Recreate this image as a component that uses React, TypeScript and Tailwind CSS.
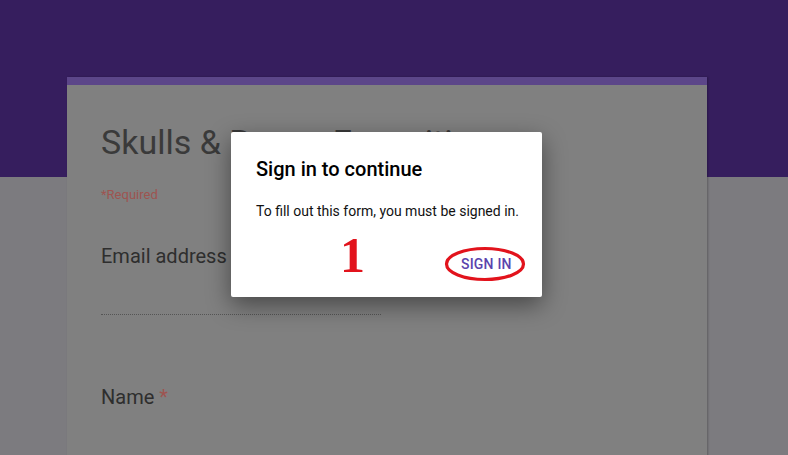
import React from "react";

const font = { fontFamily: "Roboto, 'Noto Sans', Arial, sans-serif" };

function SignInDialog() {
  return (
    <div
      className="absolute left-[231px] top-[132px] w-[311px] h-[165px] bg-white rounded-[2px] shadow-[0_8px_24px_rgba(0,0,0,0.45)] pl-[25px] pr-[18px]"
      style={font}
    >
      <div className="pt-[25px] text-[20px] leading-[24px] font-medium text-black">
        Sign in to continue
      </div>
      <div className="mt-[21px] text-[14px] leading-[18px] text-[#111]">
        To fill out this form, you must be signed in.
      </div>
      <div className="relative mt-[12px] h-[50px]">
        <span
          className="absolute left-[84px] top-[-2px] text-[50px] leading-[50px] font-bold text-[#e2131c]"
          style={{ fontFamily: "'Liberation Serif', 'Times New Roman', serif" }}
        >
          1
        </span>
        <button className="absolute left-[205px] top-[24px] whitespace-nowrap text-[14px] leading-[16px] font-medium tracking-[0.2px] text-[#5b43ad] uppercase">
          Sign in
        </button>
        <svg
          className="absolute left-[188px] top-[14px]"
          width="82"
          height="36"
          viewBox="0 0 82 36"
        >
          <ellipse cx="41" cy="18" rx="38.5" ry="15.5" fill="none" stroke="#e2131c" strokeWidth="3.2" />
        </svg>
      </div>
    </div>
  );
}

export default function App() {
  return (
    <div className="relative w-[788px] h-[455px] overflow-hidden bg-[#7c7b7f]" style={font}>
      <div className="h-[177px] bg-[#361e5e]" />
      <div className="ml-[67px] -mt-[100px] w-[640px] h-[400px] bg-[#808080] shadow-[1px_0_2px_rgba(0,0,0,0.25)]">
        <div className="h-[8px] bg-[#5c4689]" />
        <div className="pl-[34px]">
          <div className="pt-[37px] text-[34px] leading-[40px] text-[#3a3a3a] whitespace-nowrap">
            Skulls &amp; Bones Exposition
          </div>
          <div className="mt-[25px] text-[13px] leading-[16px] text-[#9e5450]">*Required</div>
          <div className="mt-[41px] text-[20px] leading-[24px] text-[#2e2e2e]">
            Email address <span className="text-[#9e5450]">*</span>
          </div>
          <div className="mt-[46px] w-[280px] border-b border-dotted border-[#555]" />
          <div className="mt-[70px] text-[20px] leading-[24px] text-[#2e2e2e]">
            Name <span className="text-[#9e5450]">*</span>
          </div>
        </div>
      </div>
      <SignInDialog />
    </div>
  );
}
